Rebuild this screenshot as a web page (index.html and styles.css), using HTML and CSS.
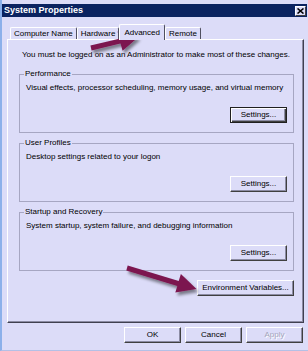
FILE: index.html
```html
<!DOCTYPE html>
<html>
<head>
<meta charset="utf-8">
<link rel="stylesheet" href="styles.css">
</head>
<body>
<div class="window">
  <div class="titlebar">
    <span class="title">System Properties</span>
    <span class="close"><svg width="7" height="6" viewBox="0 0 7 6"><path d="M0.5 0.5 L6.5 5.5 M6.5 0.5 L0.5 5.5" stroke="#000" stroke-width="1.6" fill="none"/></svg></span>
  </div>
  <div class="tabs">
    <div class="tab">Computer Name</div>
    <div class="tab">Hardware</div>
    <div class="tab active">Advanced</div>
    <div class="tab">Remote</div>
  </div>
  <div class="panel">
    <p class="note">You must be logged on as an Administrator to make most of these changes.</p>
    <fieldset class="group">
      <legend>Performance</legend>
      <p class="desc">Visual effects, processor scheduling, memory usage, and virtual memory</p>
      <div class="actions"><button class="btn btn-default">Settings...</button></div>
    </fieldset>
    <fieldset class="group">
      <legend>User Profiles</legend>
      <p class="desc">Desktop settings related to your logon</p>
      <div class="actions"><button class="btn">Settings...</button></div>
    </fieldset>
    <fieldset class="group">
      <legend>Startup and Recovery</legend>
      <p class="desc">System startup, system failure, and debugging information</p>
      <div class="actions"><button class="btn">Settings...</button></div>
    </fieldset>
    <div class="env-row"><button class="btn btn-env">Environment Variables...</button></div>
  </div>
  <div class="footer">
    <button class="btn">OK</button>
    <button class="btn">Cancel</button>
    <button class="btn btn-disabled">Apply</button>
  </div>
  <svg class="arrows" width="308" height="351" viewBox="0 0 308 351">
    <defs>
      <filter id="sh" x="-20%" y="-20%" width="140%" height="160%">
        <feDropShadow dx="2" dy="3" stdDeviation="1.6" flood-color="#000" flood-opacity="0.45"/>
      </filter>
    </defs>
    <polygon filter="url(#sh)" fill="#7c1650" points="90.4,45.6 119.3,38.8 117.6,31.6 138.5,37 122.6,50.8 120.5,43.6 91.6,50.4"/>
    <polygon filter="url(#sh)" fill="#7c1650" points="127.7,265.6 178.7,281.1 180.9,273.9 196.5,289 175.3,292.6 177.3,285.9 126.3,270.4"/>
  </svg>
</div>
</body>
</html>
```
FILE: styles.css
```css
body {
  margin: 0;
  background: #dcdcf8;
  font-family: "Liberation Sans", Arial, sans-serif;
  font-size: 8px;
  color: #000;
}

.window {
  position: relative;
  width: 308px;
  height: 351px;
  box-sizing: border-box;
  border-left: 2px solid #8cb0ea;
  border-bottom: 1px solid #b4c0e6;
  padding-top: 4px;
  background: #dcdcf8;
  overflow: hidden;
}

.titlebar {
  height: 13px;
  margin-right: 1px;
  padding-left: 2px;
  background: #0b2360;
  display: flex;
  align-items: center;
  justify-content: space-between;
}

.title {
  color: #fff;
  font-weight: bold;
  font-size: 9px;
  line-height: 13px;
}

.close {
  width: 11px;
  height: 10px;
  margin-right: 1px;
  box-sizing: border-box;
  background: #dcdcf8;
  border: 1px solid;
  border-color: #fff #404040 #404040 #fff;
  display: flex;
  align-items: center;
  justify-content: center;
}

.tabs {
  display: flex;
  align-items: flex-end;
  height: 15px;
  margin: 7px 0 0 8px;
  position: relative;
  z-index: 1;
}

.tab {
  height: 12px;
  box-sizing: border-box;
  padding: 0 3px;
  border: 1px solid;
  border-color: #fff #505060 transparent #fff;
  border-bottom: none;
  border-radius: 2px 2px 0 0;
  line-height: 11px;
  white-space: nowrap;
}

.tab.active {
  height: 16px;
  margin-bottom: -1px;
  padding: 2px 4px 0;
  background: #dcdcf8;
}

.panel {
  margin-left: 5px;
  width: 297px;
  height: 284px;
  box-sizing: border-box;
  border: 1px solid;
  border-color: #fff #404050 #404050 #fff;
  box-shadow: inset -1px -1px 0 #8c8ca4;
  padding: 9px 9px 0 11px;
}

.note {
  margin: 0 0 0 3px;
  line-height: 12px;
  white-space: nowrap;
}

.group {
  margin: 5px 0 0;
  padding: 0 0 9px;
  border: 1px solid #a6a6c2;
  min-inline-size: 0;
}

.note + .group {
  margin-top: 8px;
}

.group legend {
  margin-left: 4px;
  padding: 0 1px;
  line-height: 10px;
}

.desc {
  margin: 3px 0 0 6px;
  line-height: 12px;
  white-space: nowrap;
}

.actions {
  display: flex;
  justify-content: flex-end;
  margin-top: 13px;
  padding-right: 6px;
}

.env-row {
  display: flex;
  justify-content: flex-end;
  margin-top: 9px;
}

.btn {
  width: 57px;
  height: 16px;
  box-sizing: border-box;
  padding: 0;
  font: inherit;
  line-height: 14px;
  color: #000;
  background: #dcdcf8;
  border: 1px solid;
  border-color: #fff #404040 #404040 #fff;
  box-shadow: inset -1px -1px 0 #8c8ca4;
}

.btn-default {
  border-color: #202020;
  box-shadow: inset 1px 1px 0 #fff, inset -1px -1px 0 #404040, inset -2px -2px 0 #8c8ca4;
}

.btn-env {
  width: 97px;
}

.btn-disabled {
  color: #a4a4bc;
  text-shadow: 1px 1px 0 #fff;
}

.footer {
  display: flex;
  justify-content: flex-end;
  gap: 4px;
  margin-top: 4px;
  padding-right: 5px;
}

.arrows {
  position: absolute;
  left: -2px;
  top: 0;
  pointer-events: none;
}
```
